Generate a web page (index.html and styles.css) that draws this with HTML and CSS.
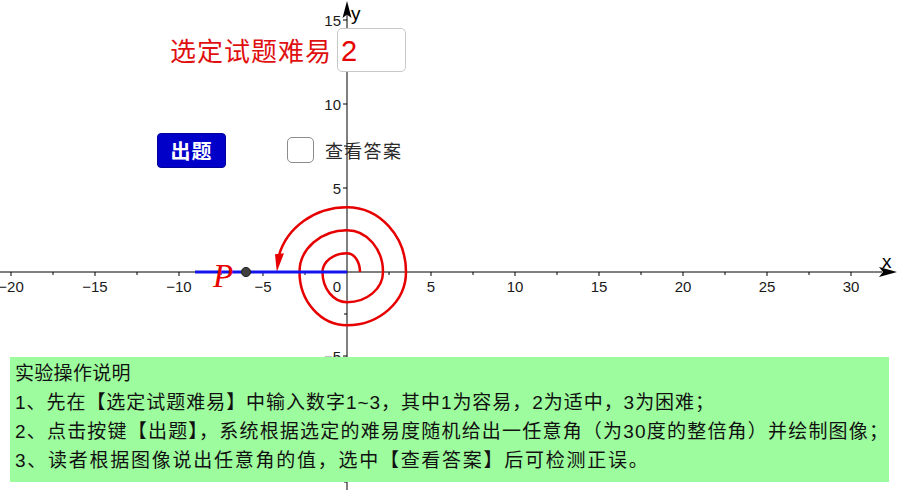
FILE: index.html
```html
<!DOCTYPE html>
<html lang="zh-CN">
<head>
<meta charset="utf-8">
<title>选定试题难易</title>
<link rel="stylesheet" href="styles.css">
</head>
<body>
<div class="applet">
  <svg class="graph" width="903" height="490" viewBox="0 0 903 490" xmlns="http://www.w3.org/2000/svg">
    <g class="axes">
      <line x1="0" y1="272" x2="882" y2="272"/>
      <line x1="347" y1="12" x2="347" y2="490"/>
      <path class="arrow" d="M897,272 L879,267 L883,272 L879,277 Z"/>
      <path class="arrow" d="M347,1 L342.5,18 L347,14.5 L351.5,18 Z"/>
      <g class="ticks">
        <line x1="11" y1="272" x2="11" y2="276"/>
        <line x1="53" y1="272" x2="53" y2="275"/>
        <line x1="95" y1="272" x2="95" y2="276"/>
        <line x1="137" y1="272" x2="137" y2="275"/>
        <line x1="179" y1="272" x2="179" y2="276"/>
        <line x1="221" y1="272" x2="221" y2="275"/>
        <line x1="263" y1="272" x2="263" y2="276"/>
        <line x1="305" y1="272" x2="305" y2="275"/>
        <line x1="389" y1="272" x2="389" y2="275"/>
        <line x1="431" y1="272" x2="431" y2="276"/>
        <line x1="473" y1="272" x2="473" y2="275"/>
        <line x1="515" y1="272" x2="515" y2="276"/>
        <line x1="557" y1="272" x2="557" y2="275"/>
        <line x1="599" y1="272" x2="599" y2="276"/>
        <line x1="641" y1="272" x2="641" y2="275"/>
        <line x1="683" y1="272" x2="683" y2="276"/>
        <line x1="725" y1="272" x2="725" y2="275"/>
        <line x1="767" y1="272" x2="767" y2="276"/>
        <line x1="809" y1="272" x2="809" y2="275"/>
        <line x1="851" y1="272" x2="851" y2="276"/>
        <line x1="343" y1="20" x2="347" y2="20"/>
        <line x1="344" y1="62" x2="347" y2="62"/>
        <line x1="343" y1="104" x2="347" y2="104"/>
        <line x1="344" y1="146" x2="347" y2="146"/>
        <line x1="343" y1="188" x2="347" y2="188"/>
        <line x1="344" y1="230" x2="347" y2="230"/>
        <line x1="344" y1="314" x2="347" y2="314"/>
        <line x1="343" y1="356" x2="347" y2="356"/>
        <line x1="344" y1="398" x2="347" y2="398"/>
        <line x1="343" y1="440" x2="347" y2="440"/>
        <line x1="344" y1="482" x2="347" y2="482"/>
      </g>
    </g>
    <g class="labels">
      <text x="11" y="292" text-anchor="middle">−20</text>
      <text x="95" y="292" text-anchor="middle">−15</text>
      <text x="179" y="292" text-anchor="middle">−10</text>
      <text x="263" y="292" text-anchor="middle">−5</text>
      <text x="341" y="292" text-anchor="end">0</text>
      <text x="431" y="292" text-anchor="middle">5</text>
      <text x="515" y="292" text-anchor="middle">10</text>
      <text x="599" y="292" text-anchor="middle">15</text>
      <text x="683" y="292" text-anchor="middle">20</text>
      <text x="767" y="292" text-anchor="middle">25</text>
      <text x="851" y="292" text-anchor="middle">30</text>
      <text x="341" y="25.5" text-anchor="end">15</text>
      <text x="341" y="109.5" text-anchor="end">10</text>
      <text x="341" y="193.5" text-anchor="end">5</text>
      <text x="341" y="361.5" text-anchor="end">−5</text>
      <text class="axis-name" x="882" y="268">x</text>
      <text class="axis-name" x="351" y="20">y</text>
    </g>
    <path class="spiral" d="M360,272 A13,18.75 0 0 0 347,253.25 A24.5,18.75 0 0 0 322.5,272 A24.5,30.25 0 0 0 347,302.25 A36,30.25 0 0 0 383,272 A36,41.75 0 0 0 347,230.25 A47.5,41.75 0 0 0 299.5,272 A47.5,53.25 0 0 0 347,325.25 A59,53.25 0 0 0 406,272 A59,64.75 0 0 0 347,207.25 A70.5,64.75 0 0 0 278.9,255.5"/>
    <polygon class="spiral-head" points="276.8,272 275,254.2 284,253.2"/>
    <line class="segment" x1="195" y1="272" x2="347" y2="272"/>
    <circle class="point" cx="246" cy="272" r="4.6"/>
    <text class="point-name" x="213" y="287">P</text>
  </svg>

  <div class="difficulty">
    <span class="difficulty-label">选定试题难易</span>
    <div class="difficulty-input">2</div>
  </div>

  <button class="ask-btn" type="button">出题</button>

  <label class="answer-check">
    <span class="answer-box"></span>
    <span class="answer-text">查看答案</span>
  </label>

  <div class="notes">
    <div class="note-line l0">实验操作说明</div>
    <div class="note-line l1">1、先在【选定试题难易】中输入数字1~3，其中1为容易，2为适中，3为困难；</div>
    <div class="note-line l2">2、点击按键【出题】，系统根据选定的难易度随机给出一任意角（为30度的整倍角）并绘制图像；</div>
    <div class="note-line l3">3、读者根据图像说出任意角的值，选中【查看答案】后可检测正误。</div>
  </div>
</div>
</body>
</html>
```

FILE: styles.css
```css
html, body {
  margin: 0;
  padding: 0;
  background: #ffffff;
}

body {
  width: 903px;
  height: 490px;
  overflow: hidden;
  font-family: "Liberation Sans", "Noto Sans CJK SC", sans-serif;
}

.applet {
  position: relative;
  width: 903px;
  height: 490px;
  overflow: hidden;
  background: #ffffff;
}

.graph {
  position: absolute;
  left: 0;
  top: 0;
  display: block;
}

.axes line {
  stroke: #000000;
  stroke-width: 1;
}

.axes .arrow {
  fill: #000000;
}

.labels text {
  font-family: "Liberation Sans", "DejaVu Sans", sans-serif;
  font-size: 15px;
  fill: #1a1a1a;
}

.labels .axis-name {
  font-size: 19px;
  fill: #000000;
}

.spiral {
  fill: none;
  stroke: #e60000;
  stroke-width: 2.5;
}

.spiral-head {
  fill: #e60000;
}

.segment {
  stroke: #1414f0;
  stroke-width: 3;
}

.point {
  fill: #404040;
  stroke: #1e1e1e;
  stroke-width: 1;
}

.point-name {
  font-family: "Liberation Serif", serif;
  font-style: italic;
  font-size: 33px;
  fill: #e60000;
}

/* widgets on the canvas */
.difficulty {
  position: absolute;
  left: 170px;
  top: 28px;
  display: flex;
  align-items: center;
  gap: 5px;
}

.difficulty-label {
  font-family: "Noto Sans CJK SC", sans-serif;
  font-size: 26px;
  letter-spacing: 1px;
  line-height: 30px;
  color: #e01010;
}

.difficulty-input {
  box-sizing: border-box;
  width: 69px;
  height: 44px;
  border: 1px solid #c9c9c9;
  border-radius: 5px;
  background: #ffffff;
  padding-left: 3px;
  font-family: "Liberation Sans", sans-serif;
  font-size: 29px;
  line-height: 44px;
  color: #e60000;
}

.ask-btn {
  position: absolute;
  left: 157px;
  top: 133px;
  box-sizing: border-box;
  width: 69px;
  height: 35px;
  margin: 0;
  padding: 0;
  border: 1px solid #00009a;
  border-radius: 4px;
  background: #0000c8;
  color: #ffffff;
  font-family: "Noto Sans CJK SC", sans-serif;
  font-weight: 700;
  font-size: 20px;
  letter-spacing: 1px;
  line-height: 33px;
  text-align: center;
}

.answer-check {
  position: absolute;
  left: 287px;
  top: 137px;
  display: flex;
  align-items: center;
  gap: 11px;
}

.answer-box {
  box-sizing: border-box;
  width: 27px;
  height: 26px;
  border: 1.5px solid #8c8c8c;
  border-radius: 5px;
  background: #ffffff;
}

.answer-text {
  font-family: "Noto Sans CJK SC", sans-serif;
  font-size: 18px;
  letter-spacing: 1.3px;
  line-height: 26px;
  color: #2a2a2a;
}

.notes {
  position: absolute;
  left: 10px;
  top: 357px;
  box-sizing: border-box;
  width: 879px;
  height: 125px;
  padding: 2px 0 0 5px;
  background: #9dfc9d;
  color: #111111;
  font-family: "Liberation Sans", "Noto Sans CJK TC", sans-serif;
  font-size: 19px;
  line-height: 29px;
}

.note-line {
  white-space: nowrap;
}

.l0 { letter-spacing: 0.3px; }
.l1 { letter-spacing: 0.96px; }
.l2 { letter-spacing: 1.2px; }
.l3 { letter-spacing: 1.74px; }
```
